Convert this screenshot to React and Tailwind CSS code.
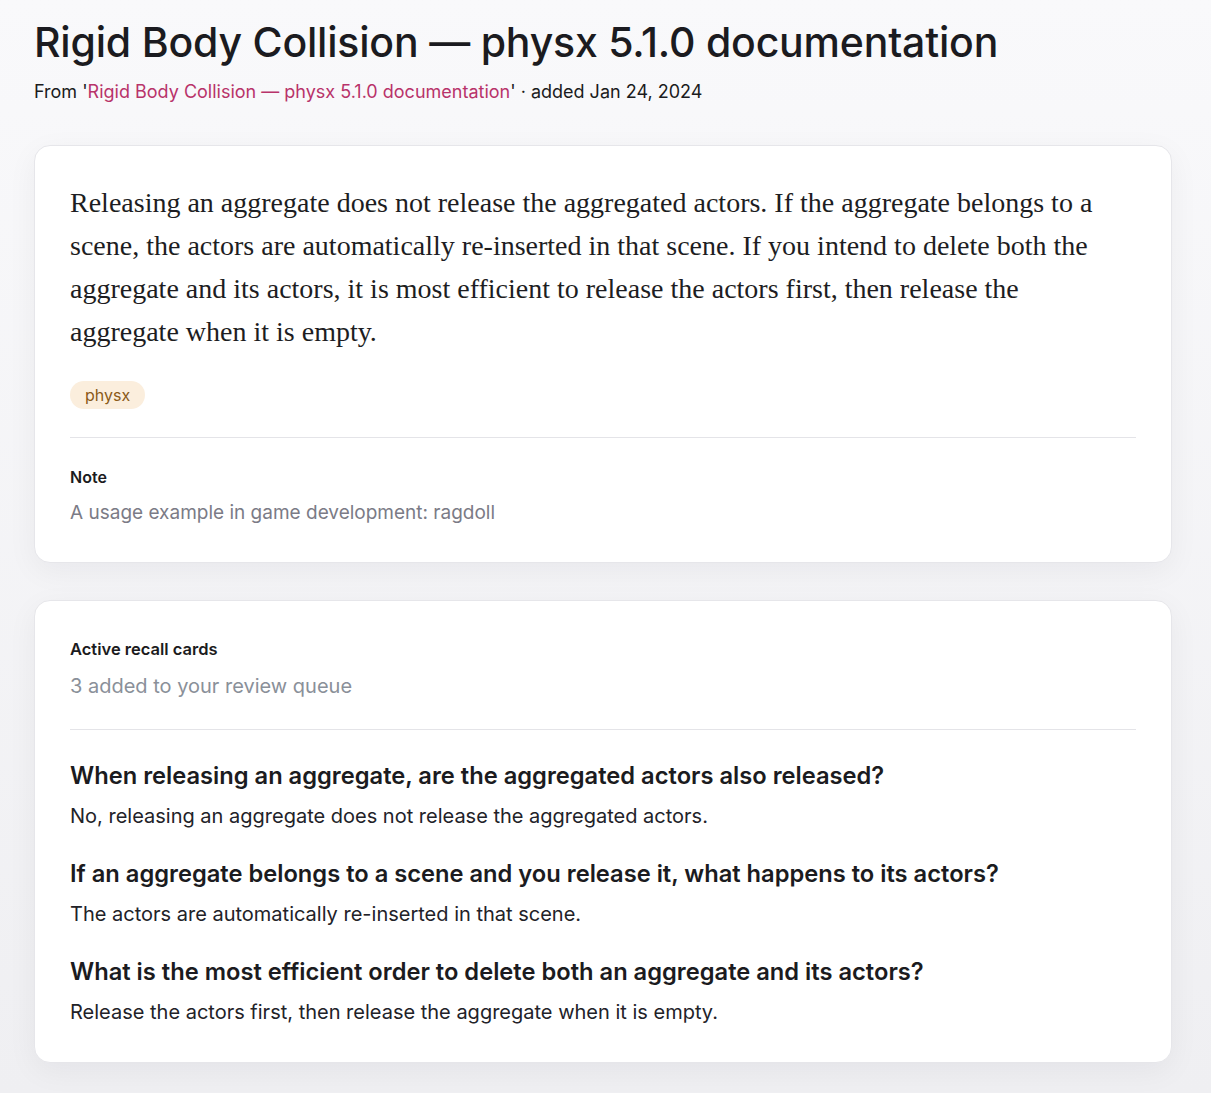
const cards = [
  {
    q: "When releasing an aggregate, are the aggregated actors also released?",
    a: "No, releasing an aggregate does not release the aggregated actors.",
  },
  {
    q: "If an aggregate belongs to a scene and you release it, what happens to its actors?",
    a: "The actors are automatically re-inserted in that scene.",
  },
  {
    q: "What is the most efficient order to delete both an aggregate and its actors?",
    a: "Release the actors first, then release the aggregate when it is empty.",
  },
];

export default function App() {
  return (
    <div className="min-h-screen bg-gradient-to-b from-[#f9f9fb] to-[#efeff2] font-['Inter',sans-serif] text-[#1b1b20]">
      <div className="pl-[34px] pr-[39px] pt-[18px] pb-[30px]">
        {/* HEADER */}
        <h1 className="text-[41px] font-medium leading-[48px] tracking-[-0.2px]">
          Rigid Body Collision — physx 5.1.0 documentation
        </h1>
        <p className="mt-[14px] text-[18px] leading-[24px]">
          From '
          <span className="text-[#b8336a]">
            Rigid Body Collision — physx 5.1.0 documentation
          </span>
          ' · added Jan 24, 2024
        </p>

        {/* HIGHLIGHT */}
        <div className="mt-[41px] bg-white rounded-[16px] border border-[#e6e6ea] shadow-[0_8px_30px_rgba(20,20,40,0.05)] px-[35px] pt-[35px] pb-[37px]">
          <p className="max-w-[1040px] font-['Liberation_Serif',serif] text-[28px] leading-[43px] text-[#1d1d22]">
            Releasing an aggregate does not release the aggregated actors. If
            the aggregate belongs to a scene, the actors are automatically
            re-inserted in that scene. If you intend to delete both the
            aggregate and its actors, it is most efficient to release the
            actors first, then release the aggregate when it is empty.
          </p>
          <div className="mt-[28px] flex">
            <span className="rounded-full bg-[#fbeedd] text-[#8a5a17] text-[16px] leading-[28px] px-[15px]">
              physx
            </span>
          </div>
          <div className="mt-[28px] border-t border-[#e4e4e8]" />
          <p className="mt-[29px] text-[16px] font-semibold leading-[20px]">
            Note
          </p>
          <p className="mt-[14px] text-[19px] leading-[24px] text-[#7b7b86]">
            A usage example in game development: ragdoll
          </p>
        </div>

        {/* RECALL CARDS */}
        <div className="mt-[37px] bg-white rounded-[16px] border border-[#e6e6ea] shadow-[0_8px_30px_rgba(20,20,40,0.05)] px-[35px] pt-[38px] pb-[37px]">
          <p className="text-[16.5px] font-semibold leading-[20px]">
            Active recall cards
          </p>
          <p className="mt-[14px] text-[20px] leading-[26px] text-[#8a9099]">
            3 added to your review queue
          </p>
          <div className="mt-[30px] border-t border-[#e4e4e8]" />
          <div className="mt-[31px] flex flex-col gap-[30px]">
            {cards.map((c) => (
              <div key={c.q}>
                <p className="text-[23.7px] font-semibold leading-[30px]">
                  {c.q}
                </p>
                <p className="mt-[12px] text-[20px] leading-[26px] text-[#222228]">
                  {c.a}
                </p>
              </div>
            ))}
          </div>
        </div>
      </div>
    </div>
  );
}
